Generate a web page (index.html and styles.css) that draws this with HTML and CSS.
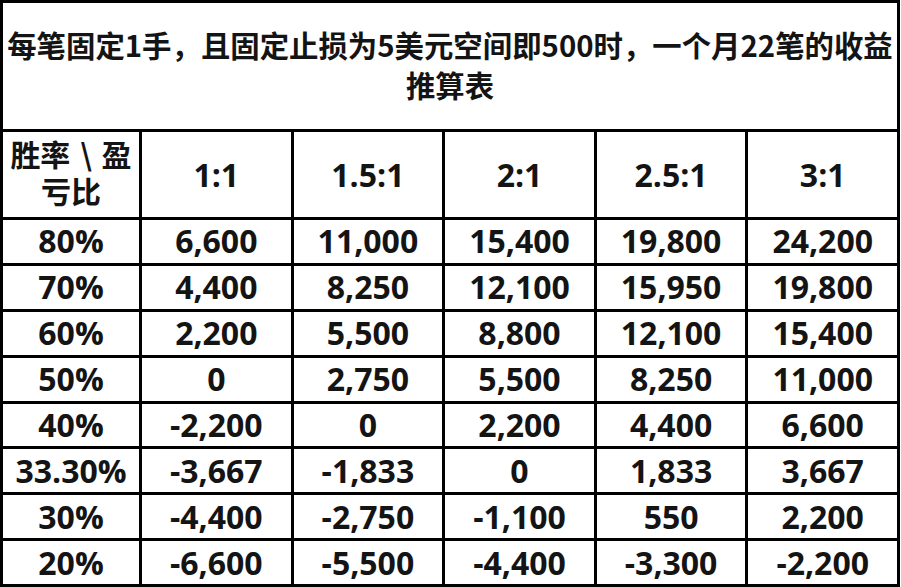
FILE: index.html
```html
<!DOCTYPE html>
<html lang="zh-CN">
<head>
<meta charset="utf-8">
<title>收益推算表</title>
<link rel="stylesheet" href="styles.css">
</head>
<body>
<div class="table">
  <div class="cell title">每笔固定1手，且固定止损为5美元空间即500时，一个月22笔的收益推算表</div>
  <div class="cell head corner">胜率 \ 盈亏比</div>
  <div class="cell head">1:1</div>
  <div class="cell head">1.5:1</div>
  <div class="cell head">2:1</div>
  <div class="cell head">2.5:1</div>
  <div class="cell head">3:1</div>

  <div class="cell">80%</div><div class="cell">6,600</div><div class="cell">11,000</div><div class="cell">15,400</div><div class="cell">19,800</div><div class="cell">24,200</div>
  <div class="cell">70%</div><div class="cell">4,400</div><div class="cell">8,250</div><div class="cell">12,100</div><div class="cell">15,950</div><div class="cell">19,800</div>
  <div class="cell">60%</div><div class="cell">2,200</div><div class="cell">5,500</div><div class="cell">8,800</div><div class="cell">12,100</div><div class="cell">15,400</div>
  <div class="cell">50%</div><div class="cell">0</div><div class="cell">2,750</div><div class="cell">5,500</div><div class="cell">8,250</div><div class="cell">11,000</div>
  <div class="cell">40%</div><div class="cell">-2,200</div><div class="cell">0</div><div class="cell">2,200</div><div class="cell">4,400</div><div class="cell">6,600</div>
  <div class="cell">33.30%</div><div class="cell">-3,667</div><div class="cell">-1,833</div><div class="cell">0</div><div class="cell">1,833</div><div class="cell">3,667</div>
  <div class="cell">30%</div><div class="cell">-4,400</div><div class="cell">-2,750</div><div class="cell">-1,100</div><div class="cell">550</div><div class="cell">2,200</div>
  <div class="cell">20%</div><div class="cell">-6,600</div><div class="cell">-5,500</div><div class="cell">-4,400</div><div class="cell">-3,300</div><div class="cell">-2,200</div>
</div>
</body>
</html>
```

FILE: styles.css
```css
html, body {
  margin: 0;
  padding: 0;
  background: #ffffff;
}

.table {
  box-sizing: border-box;
  width: 900px;
  height: 587px;
  padding: 3px;
  background: #000000;
  display: grid;
  grid-template-columns: 136px repeat(5, 1fr);
  grid-template-rows: 126px 85px repeat(8, 1fr);
  gap: 3px;
  font-family: "Open Sans", "Noto Sans CJK SC", sans-serif;
  font-weight: 700;
  color: #141414;
}

.cell {
  background: #ffffff;
  display: flex;
  align-items: center;
  justify-content: center;
  text-align: center;
  font-size: 32px;
  line-height: 40px;
  min-width: 0;
  overflow: hidden;
}

.title {
  grid-column: 1 / -1;
  font-family: "Noto Sans CJK SC", sans-serif;
  font-size: 29.4px;
  line-height: 40px;
  padding: 0 4px 4px;
}

.head {
  font-size: 32px;
}

.corner {
  display: block;
  font-family: "Noto Sans CJK SC", sans-serif;
  font-size: 30px;
  line-height: 37px;
  word-spacing: 3px;
  padding: 3px 4px 0;
}
```
